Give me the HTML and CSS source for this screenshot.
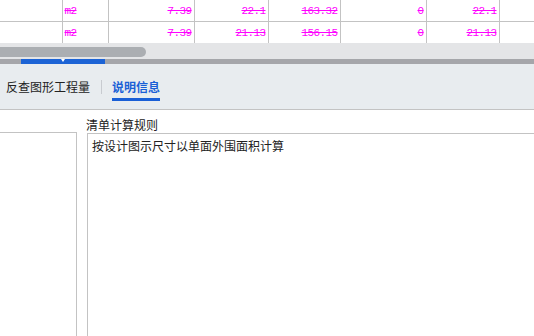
FILE: index.html
```html
<!DOCTYPE html>
<html lang="zh">
<head>
<meta charset="utf-8">
<link rel="stylesheet" href="styles.css">
</head>
<body>
<div class="page">
  <table class="grid">
    <colgroup>
      <col class="c1"><col class="c2"><col class="c3"><col class="c4"><col class="c5"><col class="c6"><col class="c7"><col class="c8">
    </colgroup>
    <tr class="r1">
      <td></td><td class="unit">m2</td><td class="num">7.39</td><td class="num">22.1</td><td class="num">163.32</td><td class="num">0</td><td class="num">22.1</td><td></td>
    </tr>
    <tr class="r2">
      <td></td><td class="unit">m2</td><td class="num">7.39</td><td class="num">21.13</td><td class="num">156.15</td><td class="num">0</td><td class="num">21.13</td><td></td>
    </tr>
  </table>
  <div class="hscroll"><div class="thumb"></div></div>
  <div class="splitter"><div class="handle"><span class="tri"></span></div></div>
  <div class="tabs">
    <span class="tab">反查图形工程量</span>
    <span class="sep"></span>
    <span class="tab active">说明信息</span>
  </div>
  <div class="content">
    <div class="leftpane"></div>
    <div class="rightpane">
      <div class="label">清单计算规则</div>
      <div class="box">按设计图示尺寸以单面外围面积计算</div>
    </div>
  </div>
</div>
</body>
</html>
```
FILE: styles.css
```css
html, body {
  margin: 0;
  padding: 0;
  background: #fff;
}
.page {
  width: 534px;
  height: 336px;
  overflow: hidden;
  display: flex;
  flex-direction: column;
  font-family: "Noto Sans CJK SC", "Noto Sans", sans-serif;
}
.grid {
  border-collapse: collapse;
  table-layout: fixed;
  width: 560px;
  min-width: 560px;
  flex: none;
}
.c1 { width: 62px; }
.c2 { width: 46px; }
.c3 { width: 86px; }
.c4 { width: 74px; }
.c5 { width: 72px; }
.c6 { width: 86px; }
.c7 { width: 73px; }
.c8 { width: 61px; }
.grid td {
  padding: 0 2px 0 2px;
  border-right: 1px solid #c3c3c3;
  font-family: "Liberation Mono", "DejaVu Sans Mono", monospace;
  font-size: 11px;
  letter-spacing: -0.6px;
  color: #ff00ff;
  text-decoration: line-through;
  white-space: nowrap;
  overflow: hidden;
}
.grid .r1 td {
  height: 21px;
  border-bottom: 1px solid #c3c3c3;
}
.grid .r2 td {
  height: 21px;
}
.grid .num { text-align: right; }
.grid .unit { text-align: left; }
.hscroll {
  height: 16px;
  background: #e4e5e7;
  flex: none;
  padding-top: 4px;
  box-sizing: border-box;
}
.thumb {
  width: 146px;
  height: 10px;
  background: #abaeb2;
  border-radius: 0 5px 5px 0;
}
.splitter {
  height: 5px;
  background: #a5a6aa;
  flex: none;
  display: flex;
}
.handle {
  margin-left: 21px;
  width: 84px;
  height: 5px;
  background: #1c63d5;
  display: flex;
  justify-content: center;
}
.tri {
  width: 0;
  height: 0;
  border-left: 2px solid transparent;
  border-right: 2px solid transparent;
  border-top: 3px solid #fff;
}
.tabs {
  height: 45px;
  background: #e8ecef;
  border-bottom: 1px solid #c3c3c3;
  flex: none;
  display: flex;
  align-items: center;
  padding-left: 6px;
}
.tab {
  font-size: 12px;
  line-height: 16px;
  color: #222;
  position: relative;
}
.tab.active {
  color: #1a5fd6;
  font-weight: bold;
}
.tab.active::after {
  content: "";
  position: absolute;
  left: 0;
  right: 0;
  bottom: -6px;
  height: 3px;
  background: #1a5fd6;
}
.sep {
  width: 1px;
  height: 14px;
  background: #c8cbd0;
  margin: 0 10px 0 11px;
}
.content {
  flex: 1;
  display: flex;
  background: #fff;
}
.leftpane {
  width: 76px;
  margin-top: 22px;
  border-top: 1px solid #c3c3c3;
  border-right: 1px solid #c3c3c3;
}
.rightpane {
  flex: 1;
  display: flex;
  flex-direction: column;
  padding-left: 9px;
  padding-top: 7px;
}
.label {
  font-size: 12px;
  line-height: 16px;
  color: #222;
}
.box {
  flex: 1;
  margin-left: 1px;
  border: 1px solid #c3c3c3;
  border-right: none;
  border-bottom: none;
  padding: 4px;
  font-size: 12px;
  line-height: 16px;
  color: #222;
}
```
